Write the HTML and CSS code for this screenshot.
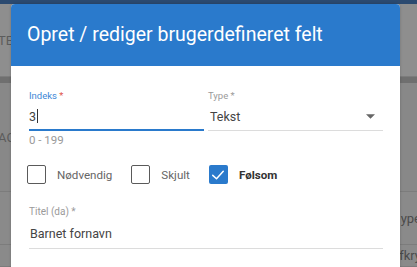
FILE: index.html
```html
<!DOCTYPE html>
<html lang="da">
<head>
    <meta charset="UTF-8">
    <meta name="viewport" content="width=device-width, initial-scale=1.0">
    <title>Opret / rediger brugerdefineret felt</title>
    <link rel="stylesheet" href="styles.css">
</head>
<body>
    <div class="backdrop">
        <div class="app-bar"></div>
        <div class="app-row row-head"><span class="left-text">TE</span></div>
        <div class="app-sep"></div>
        <div class="app-row row-mid"><span class="left-text">AC</span></div>
        <div class="app-row row-low">
            <span class="right-text">ype</span>
        </div>
        <div class="app-row row-last">
            <span class="right-text">fkry</span>
        </div>
    </div>

    <div class="dialog">
        <div class="dialog-header">Opret / rediger brugerdefineret felt</div>
        <div class="dialog-body">
            <div class="field-row">
                <div class="field focused">
                    <label>Indeks <span class="req">*</span></label>
                    <div class="value">3<span class="caret"></span></div>
                    <div class="hint">0 - 199</div>
                </div>
                <div class="field">
                    <label>Type *</label>
                    <div class="value select">Tekst
                        <svg viewBox="0 0 10 5" width="9" height="5"><polygon points="0 0 10 0 5 5" fill="#666"></polygon></svg>
                    </div>
                </div>
            </div>

            <div class="checks">
                <div class="check">
                    <span class="box"></span>
                    <span>Nødvendig</span>
                </div>
                <div class="check">
                    <span class="box"></span>
                    <span>Skjult</span>
                </div>
                <div class="check checked">
                    <span class="box">
                        <svg viewBox="0 0 24 24" width="18" height="18" fill="none" stroke="white" stroke-width="2"
                            stroke-linecap="round" stroke-linejoin="round">
                            <polyline points="5 12.5 10 17 19 7"></polyline>
                        </svg>
                    </span>
                    <span>Følsom</span>
                </div>
            </div>

            <div class="field wide">
                <label>Titel (da) *</label>
                <div class="value">Barnet fornavn</div>
            </div>
        </div>
    </div>
</body>
</html>
```

FILE: styles.css
```css
body {
    margin: 0;
    width: 417px;
    height: 267px;
    overflow: hidden;
    font-family: Roboto, 'Liberation Sans', sans-serif;
    position: relative;
    background: #8a8a8a;
}

.backdrop {
    display: flex;
    flex-direction: column;
    height: 100%;
}

.app-bar {
    height: 4px;
    background: #2b4a70;
}

.app-row {
    display: flex;
    justify-content: space-between;
    align-items: center;
    color: #5c5c5c;
    font-size: 13px;
    border-bottom: 1px solid #7c7c7c;
}

.row-head {
    height: 72px;
    background: #8e8e8e;
}

.app-sep {
    height: 6px;
    background: #6f6f6f;
}

.row-mid {
    height: 108px;
    background: #888;
}

.row-low {
    height: 52px;
    background: #8a8a8a;
    justify-content: flex-end;
}

.row-last {
    flex: 1;
    background: #8a8a8a;
    justify-content: flex-end;
}

.left-text {
    margin-left: -2px;
}

.right-text {
    margin-right: -4px;
    color: #4a4a4a;
}

.dialog {
    position: absolute;
    left: 11px;
    top: 4px;
    width: 389px;
    height: 280px;
    background: #fff;
    border-radius: 4px 4px 0 0;
    box-shadow: 0 0 3px rgba(0, 0, 0, .2);
    overflow: hidden;
}

.dialog-header {
    height: 62px;
    background: #2a7acc;
    color: #fff;
    font-size: 19.5px;
    padding-left: 16px;
    display: flex;
    align-items: center;
    box-sizing: border-box;
    padding-bottom: 2px;
}

.dialog-body {
    padding: 24px 17px 0 18px;
}

.field-row {
    display: grid;
    grid-template-columns: 1fr 1fr;
    gap: 4px;
}

.field label {
    display: block;
    font-size: 9.5px;
    color: #9a9a9a;
    height: 13px;
}

.field.focused label {
    color: #3d86d6;
}

.req {
    color: #e0564a;
}

.field .value {
    display: flex;
    align-items: center;
    justify-content: space-between;
    height: 28px;
    font-size: 12.5px;
    color: #444;
    border-bottom: 1px solid #dcdcdc;
    box-sizing: border-box;
}

.field.focused .value {
    border-bottom: 2px solid #2a7acc;
    justify-content: flex-start;
}

.caret {
    display: inline-block;
    width: 1px;
    height: 14px;
    background: #333;
    margin-left: 1px;
}

.select {
    padding-left: 2px;
}

.select svg {
    margin-right: 8px;
}

.hint {
    font-size: 11.5px;
    color: #999;
    margin-top: 2px;
}

.checks {
    display: flex;
    align-items: center;
    margin: 18px 0 0 -2px;
    font-size: 11.6px;
    color: #666;
}

.check {
    display: flex;
    align-items: center;
    gap: 11px;
    margin-right: 19px;
}

.box {
    width: 19px;
    height: 19px;
    border: 1.6px solid #5a5a5a;
    border-radius: 2px;
    box-sizing: border-box;
    display: flex;
    align-items: center;
    justify-content: center;
}

.check.checked {
    color: #333;
    font-weight: bold;
}

.check.checked .box {
    border: none;
    background: #2a7acc;
}

.field.wide {
    margin-top: 22px;
}

.field.wide label {
    font-size: 10px;
}

.field.wide .value {
    height: 30px;
    padding-left: 1px;
}
```
